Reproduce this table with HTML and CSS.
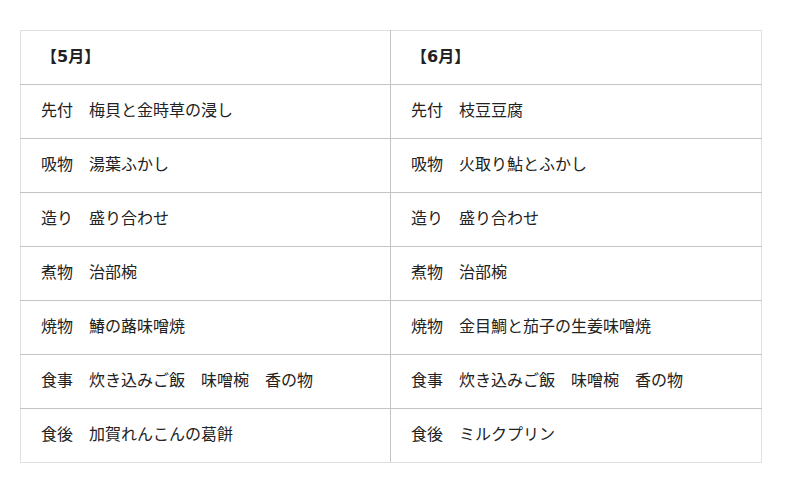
FILE: index.html
```html
<!DOCTYPE html>
<html lang="ja">
<head>
<meta charset="utf-8">
<link rel="stylesheet" href="styles.css">
</head>
<body>
<div class="wrap">
<table class="menu">
<tr><th>【5月】</th><th>【6月】</th></tr>
<tr><td>先付　梅貝と金時草の浸し</td><td>先付　枝豆豆腐</td></tr>
<tr><td>吸物　湯葉ふかし</td><td>吸物　火取り鮎とふかし</td></tr>
<tr><td>造り　盛り合わせ</td><td>造り　盛り合わせ</td></tr>
<tr><td>煮物　治部椀</td><td>煮物　治部椀</td></tr>
<tr><td>焼物　鰆の蕗味噌焼</td><td>焼物　金目鯛と茄子の生姜味噌焼</td></tr>
<tr><td>食事　炊き込みご飯　味噌椀　香の物</td><td>食事　炊き込みご飯　味噌椀　香の物</td></tr>
<tr><td>食後　加賀れんこんの葛餅</td><td>食後　ミルクプリン</td></tr>
</table>
</div>
</body>
</html>
```
FILE: styles.css
```css
html, body { margin: 0; padding: 0; background: #fff; }
.wrap { padding: 30px 38px 0 20px; }
.menu {
  width: 742px;
  border-collapse: collapse;
  table-layout: fixed;
  font-family: "DejaVu Sans", "Noto Sans CJK JP", sans-serif;
  font-size: 16px;
  line-height: 20px;
  color: #222;
}
.menu th, .menu td {
  height: 52px;
  padding: 0 0 1px 20px;
  text-align: left;
  vertical-align: middle;
  border: 1px solid #c4c4c4;
}
.menu th { font-weight: bold; }
.menu tr:first-child th { border-top-color: #e0e0e0; }
.menu tr:last-child td { border-bottom-color: #e0e0e0; }
.menu th:first-child, .menu td:first-child { border-left-color: #e0e0e0; width: 349px; }
.menu th:last-child, .menu td:last-child { border-right-color: #e0e0e0; }
```
